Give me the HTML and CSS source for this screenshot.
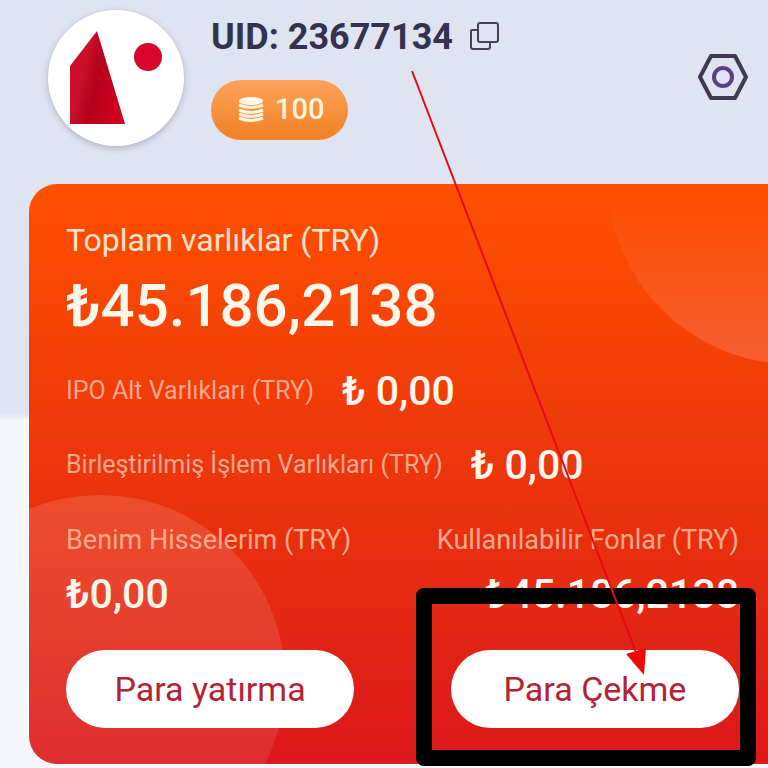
FILE: index.html
```html
<!DOCTYPE html>
<html lang="tr">
<head>
    <meta charset="UTF-8">
    <meta name="viewport" content="width=device-width, initial-scale=1.0">
    <title>Varlıklar</title>
    <link rel="stylesheet" href="styles.css">
</head>
<body>
    <header class="profile">
        <svg class="avatar" viewBox="0 0 136 136" aria-hidden="true">
            <defs>
                <linearGradient id="logoFill" x1="0" y1="0" x2="1" y2="0.4">
                    <stop offset="0" stop-color="#d80a26"/>
                    <stop offset="0.35" stop-color="#c8102a"/>
                    <stop offset="0.6" stop-color="#b5001b"/>
                    <stop offset="1" stop-color="#cf0020"/>
                </linearGradient>
            </defs>
            <circle cx="68" cy="68" r="68" fill="#fff"/>
            <path d="M49 21 L77 114 H22 V56 Z" fill="url(#logoFill)"/>
            <circle cx="100" cy="47" r="14" fill="#d6062a"/>
        </svg>
        <div class="profile-info">
            <div class="uid">
                <span>UID: 23677134</span>
                <button class="icon-button" aria-label="Kopyala">
                    <svg width="30" height="30" viewBox="0 0 30 30" fill="none" stroke="#45424f" stroke-width="2">
                        <rect x="9" y="1" width="20" height="19" rx="2"/>
                        <path d="M9 8H3a1 1 0 0 0-1 1V25a2 2 0 0 0 2 2H19a2 2 0 0 0 2-2V20"/>
                    </svg>
                </button>
            </div>
            <div class="points">
                <svg width="26" height="26" viewBox="0 0 26 26" aria-hidden="true">
                    <ellipse cx="13" cy="5" rx="12" ry="4" fill="#fff8e8"/>
                    <path d="M1 9 Q13 14 25 9 M1 14 Q13 19 25 14 M1 18 Q13 23 25 18 M1 22 Q13 27 25 22" fill="none" stroke="#fff3dc" stroke-width="3"/>
                </svg>
                <span>100</span>
            </div>
        </div>
        <button class="icon-button settings" aria-label="Ayarlar">
            <svg width="50" height="46" viewBox="0 0 50 46" fill="none" stroke="#3f3a52" stroke-width="4" stroke-linejoin="round">
                <path d="M13 2H37L48 23L37 44H13L2 23Z"/>
                <circle cx="25" cy="23" r="9" stroke="#5b3f85"/>
            </svg>
        </button>
    </header>

    <main class="card">
        <h1 class="total-label">Toplam varlıklar (TRY)</h1>
        <p class="total">₺45.186,2138</p>
        <div class="row">
            <span class="label">IPO Alt Varlıkları (TRY)</span>
            <span class="value">₺ 0,00</span>
        </div>
        <div class="row">
            <span class="label">Birleştirilmiş İşlem Varlıkları (TRY)</span>
            <span class="value">₺ 0,00</span>
        </div>
        <div class="columns">
            <div class="column">
                <span class="label large">Benim Hisselerim (TRY)</span>
                <span class="value">₺0,00</span>
                <button class="action">Para yatırma</button>
            </div>
            <div class="column right">
                <span class="label large">Kullanılabilir Fonlar (TRY)</span>
                <span class="value">₺45.186,2138</span>
                <button class="action">Para Çekme</button>
            </div>
        </div>
    </main>

    <svg class="pointer" width="768" height="768" viewBox="0 0 768 768" aria-hidden="true">
        <rect x="424" y="596" width="324" height="162" fill="none" stroke="#000" stroke-width="16" stroke-linejoin="round"/>
        <path d="M412 71L637 655" stroke="#e80a12" stroke-width="2"/>
        <path d="M626 654L646 648L644 675Z" fill="#f00808"/>
    </svg>
</body>
</html>
```

FILE: styles.css
```css
* {
    box-sizing: border-box;
}

body {
    display: flow-root;
    position: relative;
    margin: 0;
    min-height: 100vh;
    overflow-x: hidden;
    font-family: Roboto, "Liberation Sans", sans-serif;
    background: linear-gradient(#e0e4f1 414px, #f4f7fb 420px);
}

h1, p {
    margin: 0;
}

button {
    font-family: inherit;
    border: none;
    cursor: pointer;
}

.profile {
    display: flex;
    align-items: flex-start;
    padding: 10px 20px 38px 48px;
}

.avatar {
    width: 136px;
    height: 136px;
    border-radius: 50%;
    box-shadow: 0 2px 6px rgba(60, 60, 80, 0.3);
}

.profile-info {
    flex: 1;
    margin-left: 27px;
}

.uid {
    display: flex;
    align-items: center;
    gap: 16px;
    height: 54px;
    font-size: 36px;
    font-weight: 700;
    color: #34324f;
}

.icon-button {
    display: flex;
    padding: 0;
    background: none;
}

.settings {
    margin-top: 44px;
}

.points {
    display: inline-flex;
    align-items: center;
    gap: 11px;
    height: 60px;
    margin-top: 16px;
    padding: 0 24px 2px 27px;
    border-radius: 30px;
    font-size: 29px;
    font-weight: 500;
    color: #fff3dc;
    background: linear-gradient(#fba55a, #f27f25);
}

.card {
    position: relative;
    overflow: hidden;
    margin: 0 0 4px 29px;
    padding: 36px 29px 36px 37px;
    border-radius: 28px 0 0 28px;
    color: #fff6ec;
    background: linear-gradient(#ff5000, #e8300f 60%, #db181b);
}

/* decorative circles behind the content */
.card::before,
.card::after {
    content: "";
    position: absolute;
    z-index: 0;
    width: 370px;
    height: 370px;
    border-radius: 50%;
}

.card::before {
    top: -190px;
    right: -210px;
    background: linear-gradient(rgba(255, 255, 255, 0) 54%, rgba(255, 255, 255, 0.16));
}

.card::after {
    left: -114px;
    bottom: -101px;
    background: linear-gradient(rgba(255, 255, 255, 0.13), rgba(255, 255, 255, 0.08));
}

.card > * {
    position: relative;
    z-index: 1;
}

.total-label {
    font-size: 32px;
    line-height: 40px;
    font-weight: 400;
    color: #ffe3cf;
}

.total {
    margin-bottom: 16px;
    font-size: 60px;
    line-height: 92px;
    font-weight: 500;
}

.row {
    display: flex;
    align-items: center;
    gap: 28px;
    height: 46px;
    margin-bottom: 28px;
}

.label {
    font-size: 25px;
    line-height: 36px;
    white-space: nowrap;
    color: #ffa88c;
}

.label.large {
    font-size: 27px;
}

.value {
    font-size: 41px;
    line-height: 48px;
    font-weight: 500;
}

.columns {
    display: flex;
    justify-content: space-between;
    margin-top: 34px;
}

.column {
    display: flex;
    flex-direction: column;
    gap: 12px;
}

.right {
    align-items: flex-end;
}

.action {
    width: 288px;
    height: 78px;
    margin-top: 20px;
    border-radius: 39px;
    font-size: 34px;
    color: #b52234;
    background: #fff;
}

/* highlight frame and arrow over the page */
.pointer {
    position: absolute;
    z-index: 2;
    top: 0;
    left: 0;
    pointer-events: none;
}
```
